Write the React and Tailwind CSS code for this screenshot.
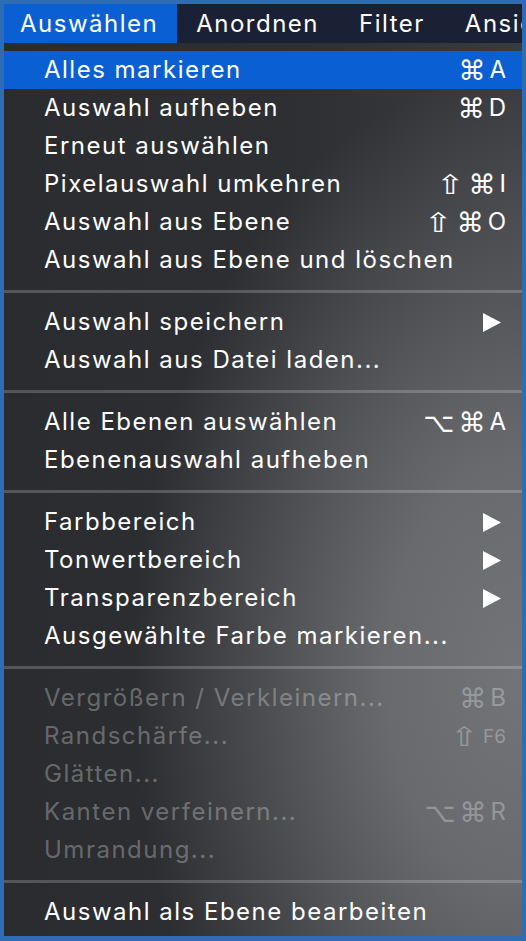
import React from 'react';

const groups = [
  [
    { label: 'Alles markieren', keys: ['⌘', 'A'], active: true },
    { label: 'Auswahl aufheben', keys: ['⌘', 'D'] },
    { label: 'Erneut auswählen' },
    { label: 'Pixelauswahl umkehren', keys: ['⇧', '⌘', 'I'] },
    { label: 'Auswahl aus Ebene', keys: ['⇧', '⌘', 'O'] },
    { label: 'Auswahl aus Ebene und löschen' },
  ],
  [
    { label: 'Auswahl speichern', sub: true },
    { label: 'Auswahl aus Datei laden...' },
  ],
  [
    { label: 'Alle Ebenen auswählen', keys: ['⌥', '⌘', 'A'] },
    { label: 'Ebenenauswahl aufheben' },
  ],
  [
    { label: 'Farbbereich', sub: true },
    { label: 'Tonwertbereich', sub: true },
    { label: 'Transparenzbereich', sub: true },
    { label: 'Ausgewählte Farbe markieren...' },
  ],
  [
    { label: 'Vergrößern / Verkleinern...', keys: ['⌘', 'B'], disabled: true },
    { label: 'Randschärfe...', keys: ['⇧', 'F6'], disabled: true, small: true },
    { label: 'Glätten...', disabled: true },
    { label: 'Kanten verfeinern...', keys: ['⌥', '⌘', 'R'], disabled: true },
    { label: 'Umrandung...', disabled: true },
  ],
  [{ label: 'Auswahl als Ebene bearbeiten' }],
];

const Arrow = () => (
  <svg width="18" height="19" viewBox="0 0 18 19" className="mr-[5px]">
    <polygon points="0,0 18,9.5 0,19" fill="white" />
  </svg>
);

const Shortcut = ({ keys, small }) => (
  <span className="flex items-center gap-[4px] tracking-normal">
    {keys.map((k, i) => {
      if (small && k === 'F6') {
        return (
          <span key={i} className="text-[19px]">
            {k}
          </span>
        );
      }
      if (k === '⇧') {
        return (
          <span key={i} className="font-['DejaVu_Sans',sans-serif] text-[27px] inline-block scale-x-125 mr-[3px]">
            {k}
          </span>
        );
      }
      const isSymbol = k === '⌘' || k === '⌥';
      return (
        <span key={i} className={isSymbol ? "font-['DejaVu_Sans',sans-serif] text-[27px]" : ''}>
          {k}
        </span>
      );
    })}
  </span>
);

const Row = ({ item }) => (
  <div
    className={`h-[38px] flex items-center justify-between pl-[40px] pr-[16px] ${
      item.active ? 'bg-[#0a5fd3]' : ''
    } ${item.disabled ? 'text-white/30' : 'text-white'}`}
  >
    <span className="tracking-[1.5px]">{item.label}</span>
    {item.keys && <Shortcut keys={item.keys} small={item.small} />}
    {item.sub && <Arrow />}
  </div>
);

export default function App() {
  return (
    <div className="w-[526px] h-[941px] bg-[#2f6cb3] pt-[4px] pl-[4px] pr-[4px] pb-[5px] font-['Inter','Noto_Sans',sans-serif] text-[24px] leading-none">
      <div className="h-full flex flex-col overflow-hidden bg-[radial-gradient(ellipse_75%_65%_at_100%_72%,#727478_0%,#686a6e_35%,rgba(44,46,49,0)_100%),linear-gradient(to_right,#2a2c2f,#2d2f32_55%,#393b3f)]">
        <div className="h-[39px] flex items-center bg-[#1b2134] text-white whitespace-nowrap tracking-[1.5px]">
          <div className="h-full flex items-center bg-[#0a5fd3] pl-[16px] pr-[19px]">Auswählen</div>
          <div className="pl-[19px] pr-[20px]">Anordnen</div>
          <div className="px-[20px]">Filter</div>
          <div className="px-[20px]">Ansicht</div>
        </div>
        <div className="pt-[8px]">
          {groups.map((g, gi) => (
            <div key={gi}>
              {gi > 0 && (
                <div className="h-[24px] flex items-center">
                  <div className="w-full h-[3px] bg-white/20" />
                </div>
              )}
              {g.map((item, i) => (
                <Row key={i} item={item} />
              ))}
            </div>
          ))}
        </div>
      </div>
    </div>
  );
}
